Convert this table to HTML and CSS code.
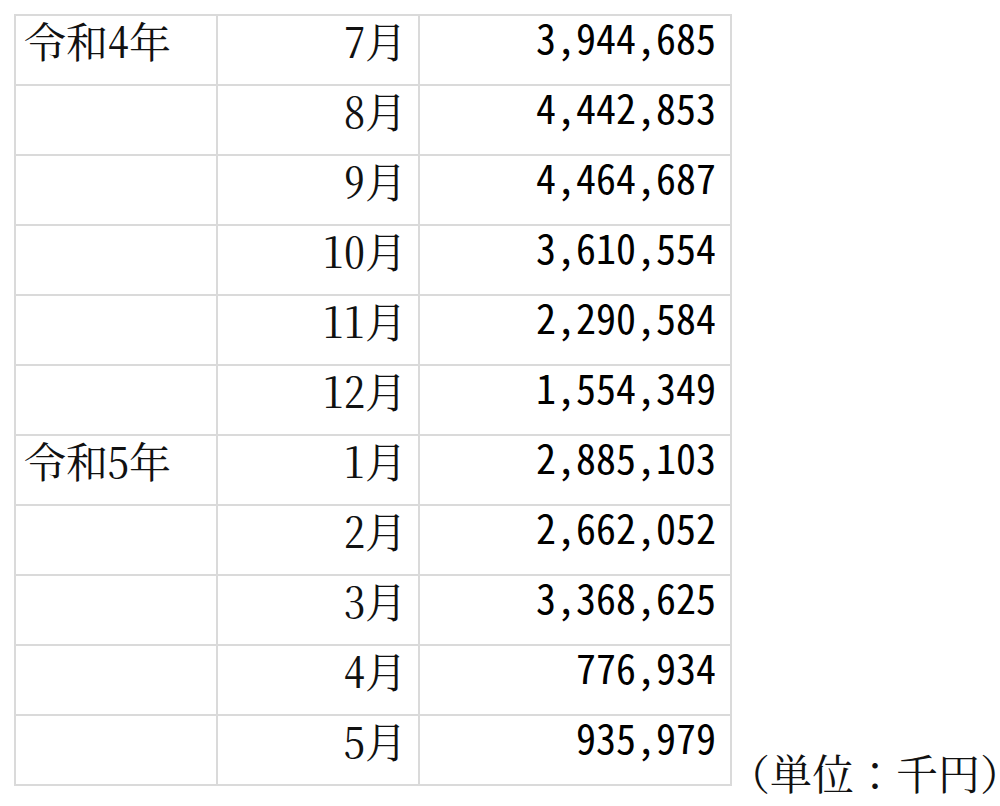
FILE: index.html
```html
<!DOCTYPE html>
<html lang="ja">
<head>
<meta charset="utf-8">
<link rel="stylesheet" href="styles.css">
</head>
<body>
<div class="page">
  <table class="sales">
    <colgroup>
      <col class="c-era">
      <col class="c-month">
      <col class="c-amount">
    </colgroup>
    <tbody>
      <tr><td class="era">令和4年</td><td class="month">7月</td><td class="amount">3,944,685</td></tr>
      <tr><td class="era"></td><td class="month">8月</td><td class="amount">4,442,853</td></tr>
      <tr><td class="era"></td><td class="month">9月</td><td class="amount">4,464,687</td></tr>
      <tr><td class="era"></td><td class="month">10月</td><td class="amount">3,610,554</td></tr>
      <tr><td class="era"></td><td class="month">11月</td><td class="amount">2,290,584</td></tr>
      <tr><td class="era"></td><td class="month">12月</td><td class="amount">1,554,349</td></tr>
      <tr><td class="era">令和5年</td><td class="month">1月</td><td class="amount">2,885,103</td></tr>
      <tr><td class="era"></td><td class="month">2月</td><td class="amount">2,662,052</td></tr>
      <tr><td class="era"></td><td class="month">3月</td><td class="amount">3,368,625</td></tr>
      <tr><td class="era"></td><td class="month">4月</td><td class="amount">776,934</td></tr>
      <tr><td class="era"></td><td class="month">5月</td><td class="amount">935,979</td></tr>
    </tbody>
  </table>
  <div class="unit"><span class="paren">（</span>単位：千円<span class="paren">）</span></div>
</div>
</body>
</html>
```
FILE: styles.css
```css
html, body {
  margin: 0;
  padding: 0;
  background: #ffffff;
  overflow: hidden;
}

.page {
  display: flex;
  align-items: flex-end;
  padding: 14px 0 0 14px;
}

.sales {
  flex-shrink: 0;
  border-collapse: collapse;
  table-layout: fixed;
  width: 716px;
  color: #111111;
  margin-bottom: 8px;
}

.c-era { width: 202px; }
.c-month { width: 202px; }
.c-amount { width: 312px; }

.sales td {
  border: 2px solid #dadada;
  height: 70px;
  padding: 0;
  vertical-align: top;
  box-sizing: border-box;
}

.sales td.era,
.sales td.month {
  font-family: "Noto Serif CJK JP", "Liberation Serif", serif;
  font-feature-settings: "hwid" 1;
  font-size: 42px;
  line-height: 42px;
  padding-top: 3px;
}

.sales td.era {
  text-align: left;
  padding-left: 8px;
}

.sales td.month {
  text-align: right;
  padding-right: 11px;
}

.sales td.amount {
  text-align: right;
  font-family: "Noto Sans CJK JP", sans-serif;
  font-feature-settings: "hwid" 1;
  font-size: 40px;
  line-height: 40px;
  padding-top: 1px;
  padding-right: 14px;
  color: #000000;
}

.unit {
  flex-shrink: 0;
  font-family: "Noto Serif CJK JP", "Liberation Serif", serif;
  font-size: 42px;
  line-height: 44px;
  color: #111111;
  margin-left: 17px;
  white-space: nowrap;
}

.paren {
  font-feature-settings: "halt" 1;
}
```
